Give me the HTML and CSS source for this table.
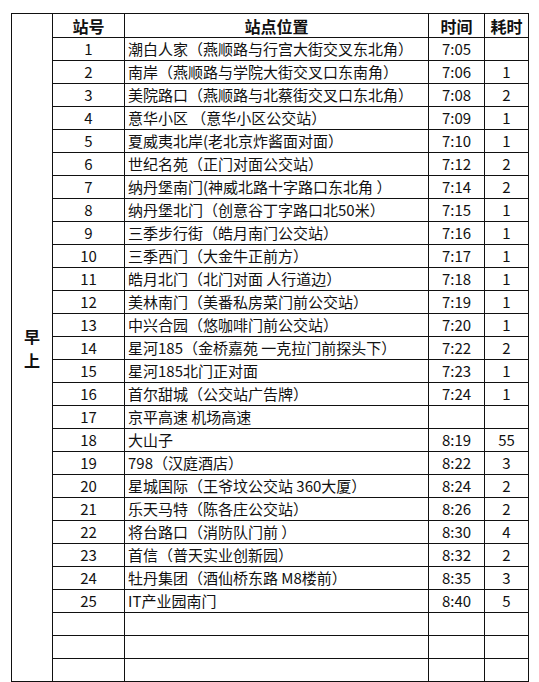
FILE: index.html
```html
<!DOCTYPE html>
<html lang="zh">
<head>
<meta charset="utf-8">
<link rel="stylesheet" href="styles.css">
</head>
<body>
<table class="sched">
  <colgroup>
    <col class="c-period">
    <col class="c-no">
    <col class="c-place">
    <col class="c-time">
    <col class="c-cost">
  </colgroup>
  <tr class="head">
    <td class="period" rowspan="29"><span>早</span><span>上</span></td>
    <th>站号</th>
    <th>站点位置</th>
    <th>时间</th>
    <th>耗时</th>
  </tr>
  <tr><td class="no">1</td><td class="place">潮白人家（燕顺路与行宫大街交叉东北角）</td><td class="time">7:05</td><td class="cost"></td></tr>
  <tr><td class="no">2</td><td class="place">南岸（燕顺路与学院大街交叉口东南角）</td><td class="time">7:06</td><td class="cost">1</td></tr>
  <tr><td class="no">3</td><td class="place">美院路口（燕顺路与北蔡街交叉口东北角）</td><td class="time">7:08</td><td class="cost">2</td></tr>
  <tr><td class="no">4</td><td class="place">意华小区 （意华小区公交站）</td><td class="time">7:09</td><td class="cost">1</td></tr>
  <tr><td class="no">5</td><td class="place">夏威夷北岸(老北京炸酱面对面）</td><td class="time">7:10</td><td class="cost">1</td></tr>
  <tr><td class="no">6</td><td class="place">世纪名苑（正门对面公交站）</td><td class="time">7:12</td><td class="cost">2</td></tr>
  <tr><td class="no">7</td><td class="place">纳丹堡南门(神威北路十字路口东北角 ）</td><td class="time">7:14</td><td class="cost">2</td></tr>
  <tr><td class="no">8</td><td class="place">纳丹堡北门（创意谷丁字路口北50米）</td><td class="time">7:15</td><td class="cost">1</td></tr>
  <tr><td class="no">9</td><td class="place">三季步行街（皓月南门公交站）</td><td class="time">7:16</td><td class="cost">1</td></tr>
  <tr><td class="no">10</td><td class="place">三季西门（大金牛正前方）</td><td class="time">7:17</td><td class="cost">1</td></tr>
  <tr><td class="no">11</td><td class="place">皓月北门（北门对面 人行道边）</td><td class="time">7:18</td><td class="cost">1</td></tr>
  <tr><td class="no">12</td><td class="place">美林南门（美番私房菜门前公交站）</td><td class="time">7:19</td><td class="cost">1</td></tr>
  <tr><td class="no">13</td><td class="place">中兴合园（悠咖啡门前公交站）</td><td class="time">7:20</td><td class="cost">1</td></tr>
  <tr><td class="no">14</td><td class="place">星河185（金桥嘉苑 一克拉门前探头下）</td><td class="time">7:22</td><td class="cost">2</td></tr>
  <tr><td class="no">15</td><td class="place">星河185北门正对面</td><td class="time">7:23</td><td class="cost">1</td></tr>
  <tr><td class="no">16</td><td class="place">首尔甜城（公交站广告牌）</td><td class="time">7:24</td><td class="cost">1</td></tr>
  <tr><td class="no">17</td><td class="place">京平高速 机场高速</td><td class="time"></td><td class="cost"></td></tr>
  <tr><td class="no">18</td><td class="place">大山子</td><td class="time">8:19</td><td class="cost">55</td></tr>
  <tr><td class="no">19</td><td class="place">798（汉庭酒店）</td><td class="time">8:22</td><td class="cost">3</td></tr>
  <tr><td class="no">20</td><td class="place">星城国际（王爷坟公交站 360大厦）</td><td class="time">8:24</td><td class="cost">2</td></tr>
  <tr><td class="no">21</td><td class="place">乐天马特（陈各庄公交站）</td><td class="time">8:26</td><td class="cost">2</td></tr>
  <tr><td class="no">22</td><td class="place">将台路口（消防队门前 ）</td><td class="time">8:30</td><td class="cost">4</td></tr>
  <tr><td class="no">23</td><td class="place">首信（普天实业创新园）</td><td class="time">8:32</td><td class="cost">2</td></tr>
  <tr><td class="no">24</td><td class="place">牡丹集团（酒仙桥东路 M8楼前）</td><td class="time">8:35</td><td class="cost">3</td></tr>
  <tr><td class="no">25</td><td class="place">IT产业园南门</td><td class="time">8:40</td><td class="cost">5</td></tr>
  <tr><td class="no"></td><td class="place"></td><td class="time"></td><td class="cost"></td></tr>
  <tr><td class="no"></td><td class="place"></td><td class="time"></td><td class="cost"></td></tr>
  <tr><td class="no"></td><td class="place"></td><td class="time"></td><td class="cost"></td></tr>
</table>
</body>
</html>
```

FILE: styles.css
```css
html, body {
  margin: 0;
  padding: 0;
  background: #fff;
}

body {
  padding: 13px 0 0 11px;
  font-family: "Noto Sans CJK SC", "Noto Sans", sans-serif;
  font-size: 15px;
  color: #111;
}

.sched {
  border-collapse: collapse;
  table-layout: fixed;
  width: 517px;
}

.c-period { width: 41px; }
.c-no { width: 72px; }
.c-place { width: 304px; }
.c-time { width: 56px; }
.c-cost { width: 44px; }

.sched td,
.sched th {
  border: 1px solid #111;
  padding: 0;
  height: 22px;
  line-height: 22px;
  white-space: nowrap;
  overflow: hidden;
}

.sched th {
  height: 23px;
  font-weight: 700;
  font-size: 16px;
  text-align: center;
}

.period {
  text-align: center;
  vertical-align: middle;
  font-weight: 700;
  font-size: 16px;
}

.period span {
  display: block;
  line-height: 24px;
}

.no,
.time,
.cost {
  text-align: center;
}

.place {
  padding-left: 3px !important;
  text-align: left;
  font-family: "Noto Sans CJK TC", "Noto Sans CJK SC", sans-serif;
}
```
